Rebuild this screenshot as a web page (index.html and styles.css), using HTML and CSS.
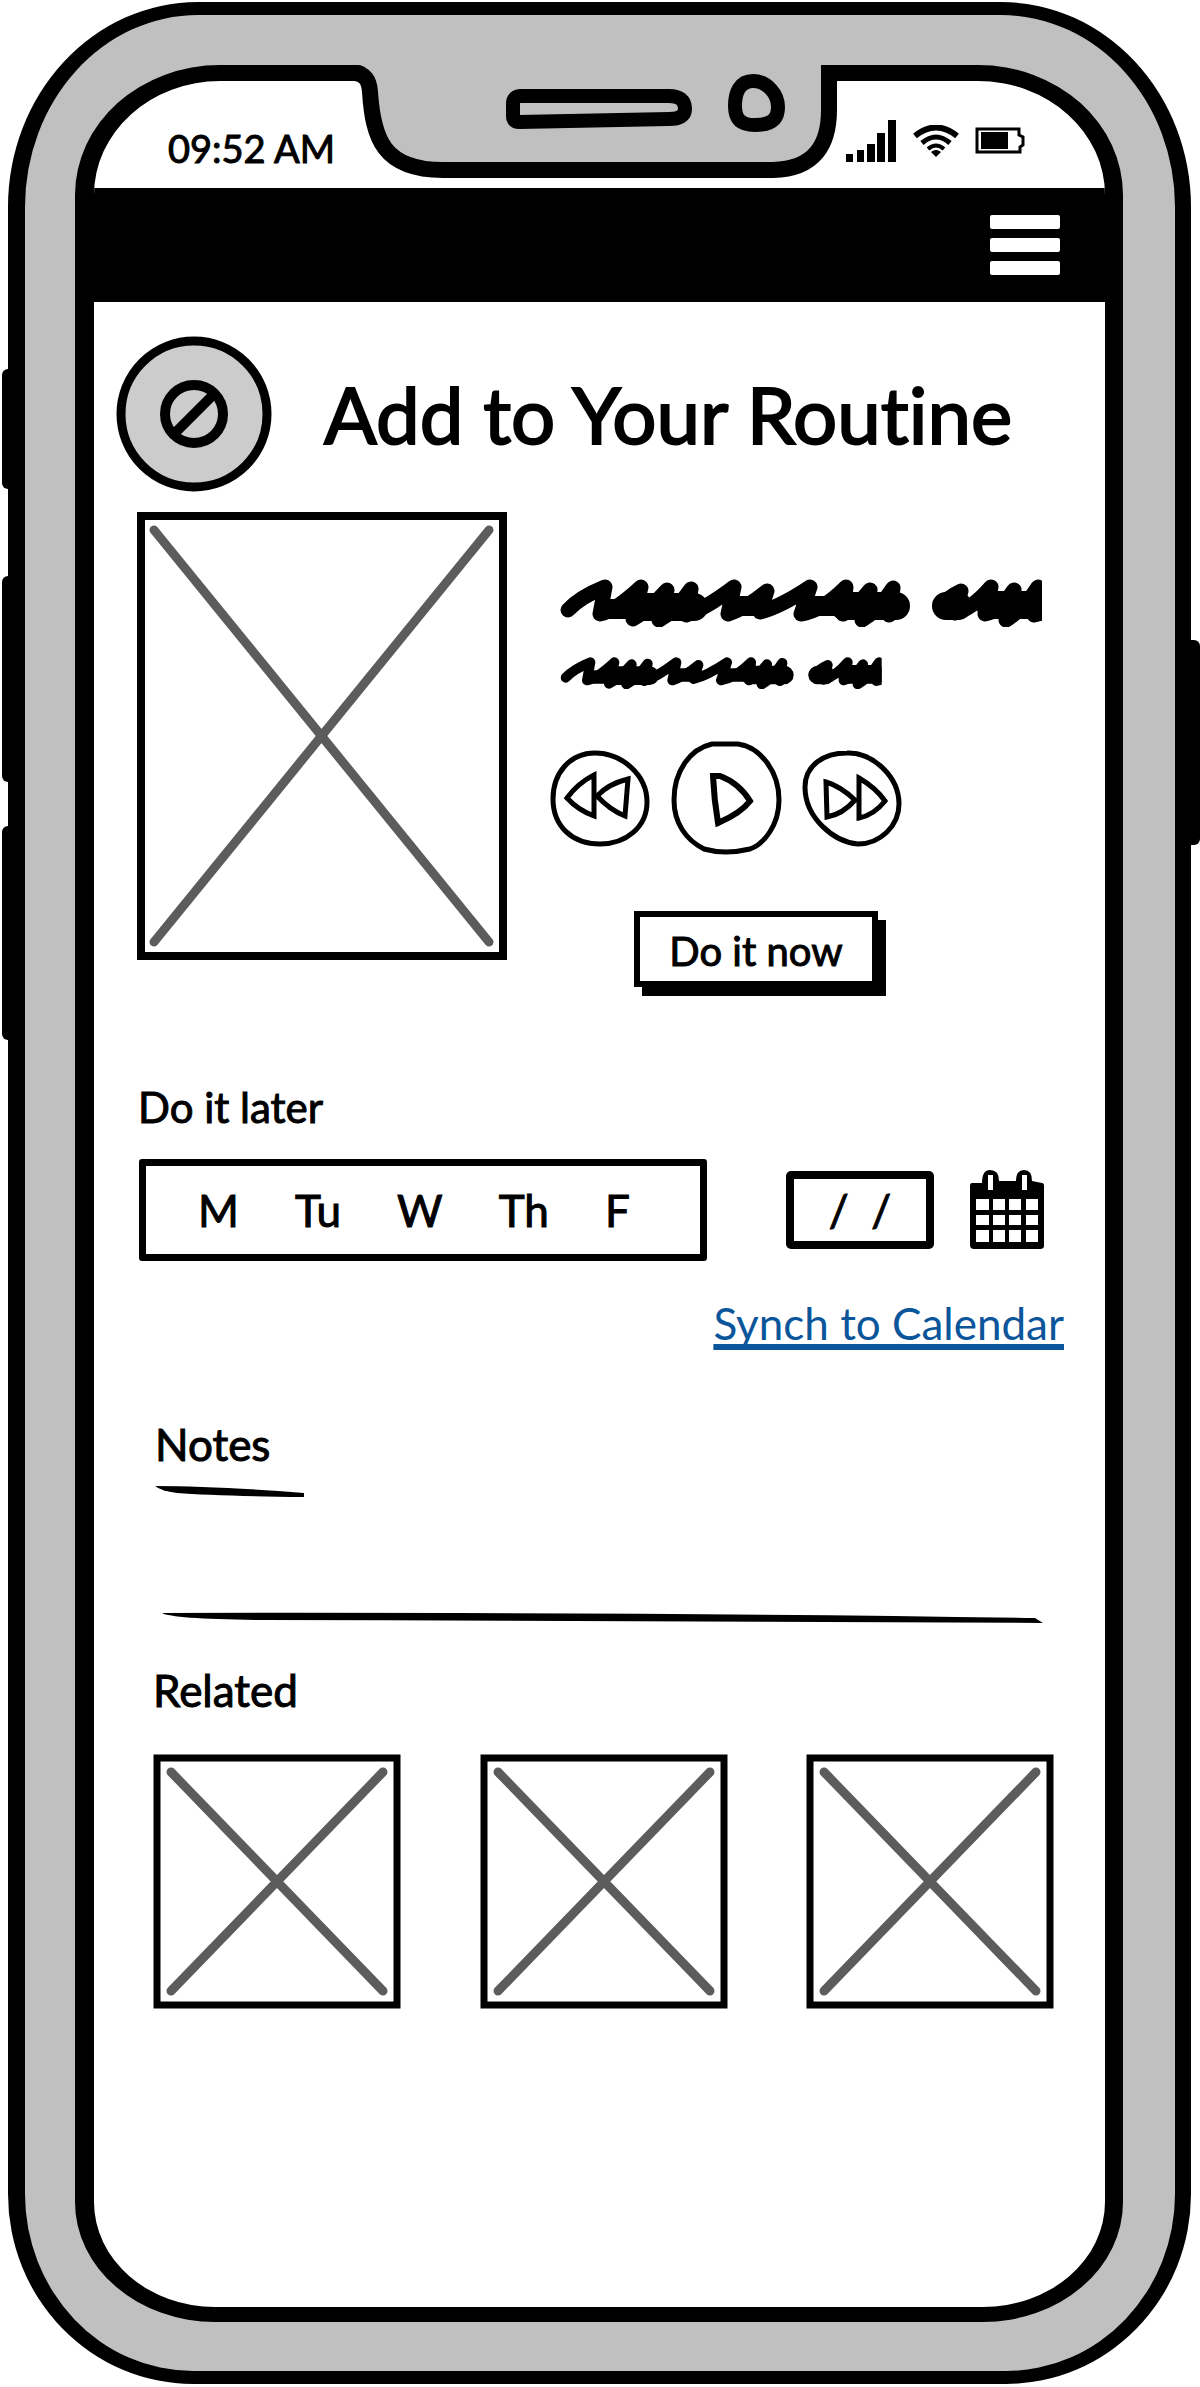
FILE: index.html
```html
<!DOCTYPE html>
<html lang="en">
<head>
<meta charset="utf-8">
<meta name="viewport" content="width=device-width, initial-scale=1">
<title>Add to Your Routine</title>
<link rel="stylesheet" href="styles.css">
</head>
<body>
<svg class="defs" aria-hidden="true">
  <symbol id="scribble" viewBox="0 0 482 48">
    <g fill="none" stroke="#000" stroke-width="15" stroke-linecap="round" stroke-linejoin="round">
      <path d="M8 31Q20 18 45 8L40 35Q55 32 81 8L73 40Q88 32 107 11L99 41Q116 32 131 10L126 36Q145 30 174 8L168 35Q185 30 207 12L200 33Q220 28 250 8L241 35Q262 32 286 8L283 35Q295 30 310 11L302 41Q318 32 333 9L329 36L341 28"/>
      <path d="M380 28Q388 18 401 12L395 34Q412 30 431 8L425 35Q440 32 454 11L446 41Q464 30 478 8L474 36L490 32"/>
      <path d="M46 30H130M174 27H204M250 27H280" stroke-width="20"/>
      <path d="M74 28H134M284 27H336M386 27H398M430 26H474" stroke-width="28"/>
    </g>
  </symbol>
</svg>
<div class="phone">
  <span class="key key-mute"></span>
  <span class="key key-up"></span>
  <span class="key key-down"></span>
  <span class="key key-power"></span>
  <svg class="notch" viewBox="0 0 500 122" aria-hidden="true">
    <path d="M0 0V5H6Q20 5 20 26C22 78 34 108 90 108H424C462 107 478 84 478 50V12H500V0Z" fill="#c0c0c0"/>
    <path d="M0 13H4Q18 14 19 32C22 78 32 110 92 110H422C464 109 478 84 478 50V13H500" fill="none" stroke="#000" stroke-width="16"/>
    <path d="M170 36H318Q334 36 334 49Q334 59 318 59L168 62Q162 62 162 56V44Q162 36 170 36Z" fill="none" stroke="#000" stroke-width="14"/>
    <path d="M402 21C416 21 427 34 427 47C427 60 419 65 404 65C389 65 384 58 384 46C384 32 389 21 402 21Z" fill="none" stroke="#000" stroke-width="14"/>
  </svg>
  <div class="screen">
    <div class="status">
      <span class="time">09:52 AM</span>
      <span class="indicators">
        <svg width="52" height="44" viewBox="0 0 52 44" aria-label="Signal"><path d="M1 35h7v8H1zM12 31h7v12h-7zM22 25h8v18h-8zM32 14h8v29h-8zM43 1h8v42h-8z"/></svg>
        <svg width="46" height="32" viewBox="0 0 46 32" aria-label="Wi-Fi"><g fill="none" stroke="#000" stroke-width="6"><path d="M2 11Q23 -6 44 11"/><path d="M9 18Q23 6 37 18" stroke-width="5"/><path d="M15 24Q23 17 31 24" stroke-width="4"/></g><path d="M18 27Q23 23 28 27L23 32Z"/></svg>
        <svg width="50" height="29" viewBox="0 0 50 29" aria-label="Battery"><path d="M2 3H44V9L48 11V19L45 21V26H2Z" fill="none" stroke="#000" stroke-width="3"/><path d="M6 6h27v17H6z"/></svg>
      </span>
    </div>
    <nav class="bar">
      <button class="menu" aria-label="Menu"><i></i><i></i><i></i></button>
    </nav>
    <main>
      <header class="head">
        <svg width="156" height="156" viewBox="0 0 156 156" aria-hidden="true"><circle cx="78" cy="78" r="73" fill="#ccc" stroke="#000" stroke-width="9"/><g fill="none" stroke="#000" stroke-width="10"><circle cx="78" cy="78" r="29"/><path d="M58 98L98 58"/></g></svg>
        <h1>Add to Your Routine</h1>
      </header>
      <section class="hero">
        <svg class="photo" viewBox="0 0 372 450" role="img" aria-label="Image placeholder"><path d="M5 5H367V445H5Z" fill="#fff" stroke="#000" stroke-width="8"/><path d="M18 19L353 431M353 19L18 431" stroke="#5c5c5c" stroke-width="9" stroke-linecap="round"/></svg>
        <div class="details">
          <svg class="line-lg" viewBox="0 0 482 48" aria-hidden="true"><use href="#scribble"/></svg>
          <svg class="line-sm" viewBox="0 0 482 48" aria-hidden="true"><use href="#scribble"/></svg>
          <div class="controls">
            <button aria-label="Rewind"><svg width="100" height="97" viewBox="0 0 100 97"><g fill="none" stroke="#000" stroke-width="5"><path d="M45 3C72 3 97 25 97 52C97 77 76 94 50 94C22 94 3 76 3 49C3 23 20 3 45 3Z"/><path d="M17 48Q28 33 44 25V66Q28 60 17 48ZM47 46Q58 34 78 29L75 66Q60 60 47 46Z"/></g></svg></button>
            <button aria-label="Play"><svg width="112" height="114" viewBox="-2 0 112 114"><g fill="none" stroke="#000" stroke-width="5"><path d="M40 3H66C88 6 107 30 107 59C107 84 92 103 78 108Q53 114 32 108C14 99 2 82 2 59C2 30 18 8 40 3Z"/><path d="M41 35H48Q67 42 78 60Q69 72 46 82Q42 58 41 35Z" stroke-width="6"/></g></svg></button>
            <button aria-label="Fast forward"><svg width="100" height="97" viewBox="0 0 100 97"><g fill="none" stroke="#000" stroke-width="5"><path d="M45 3C70 2 97 26 97 54C97 76 78 94 56 94C32 92 3 68 3 37C3 15 22 3 45 3Z"/><path d="M24 32Q38 36 53 50Q41 64 25 67ZM57 28Q74 38 83 51Q72 65 57 68Z"/></g></svg></button>
          </div>
          <button class="now">Do it now</button>
        </div>
      </section>
      <section class="later">
        <h2>Do it later</h2>
        <div class="schedule">
          <div class="days">
            <button>M</button><button>Tu</button><button>W</button><button>Th</button><button>F</button>
          </div>
          <input class="date" type="text" value="/  /" aria-label="Date">
          <button class="pick" aria-label="Open calendar"><svg width="76" height="82" viewBox="0 0 76 82"><path d="M3 14H13Q13 1 21 1Q30 1 30 12H47Q47 1 55 1Q63 1 63 12L73 14Q75 14 75 17V77Q75 80 71 80H5Q1 80 1 76V17Q1 14 3 14Z"/><path d="M19 6h5v15h-5zM53 6h5v15h-5zM7 30h13v11H7zM24 30h12v11H24zM40 30h12v11H40zM57 30h12v11H57zM7 46h13v10H7zM24 46h12v10H24zM40 46h12v10H40zM57 46h12v10H57zM7 61h13v12H7zM24 61h12v12H24zM40 61h12v12H40zM57 61h12v12H57z" fill="#fff"/></svg></button>
        </div>
        <a class="synch" href="#">Synch to Calendar</a>
      </section>
      <section class="notes">
        <h2><label for="notes">Notes</label></h2>
        <svg class="stroke-short" viewBox="0 0 149 12" preserveAspectRatio="none" aria-hidden="true"><path d="M0 0Q60 0 149 7V11Q60 10 22 7Q6 5 0 0Z"/></svg>
        <textarea id="notes"></textarea>
        <svg class="stroke-long" viewBox="0 0 880 13" preserveAspectRatio="none" aria-hidden="true"><path d="M0 1Q500 0 872 6L880 11Q500 9 100 8Q10 7 0 1Z"/></svg>
      </section>
      <section class="related">
        <h2>Related</h2>
        <div class="tiles">
          <svg viewBox="0 0 248 256" role="img" aria-label="Related item 1"><path d="M4 4H244V251H4Z" fill="#fff" stroke="#000" stroke-width="7"/><path d="M18 18L230 237M230 18L18 237" stroke="#5c5c5c" stroke-width="9" stroke-linecap="round"/></svg>
          <svg viewBox="0 0 248 256" role="img" aria-label="Related item 2"><path d="M4 4H244V251H4Z" fill="#fff" stroke="#000" stroke-width="7"/><path d="M18 18L230 237M230 18L18 237" stroke="#5c5c5c" stroke-width="9" stroke-linecap="round"/></svg>
          <svg viewBox="0 0 248 256" role="img" aria-label="Related item 3"><path d="M4 4H244V251H4Z" fill="#fff" stroke="#000" stroke-width="7"/><path d="M18 18L230 237M230 18L18 237" stroke="#5c5c5c" stroke-width="9" stroke-linecap="round"/></svg>
        </div>
      </section>
    </main>
  </div>
</div>
</body>
</html>
```
FILE: styles.css
```css
* { box-sizing: border-box; }
body {
  margin: 0;
  padding: 2px 9px 3px 8px;
  min-height: 100vh;
  display: flex;
  background: #fff;
  color: #000;
  font: 44px/56px Lato, "Open Sans", sans-serif;
  font-variant-ligatures: none;
  -webkit-text-stroke: 1px currentColor;
}
button, input, textarea { font: inherit; color: inherit; -webkit-text-stroke: inherit; }
button { padding: 0; border: 0; background: none; cursor: pointer; }
svg { display: block; }
h1, h2 { margin: 0; font-weight: 400; }
h2 { font-size: 44px; }
.defs { position: absolute; width: 0; height: 0; }

.phone {
  position: relative;
  flex: 1;
  display: flex;
  padding: 50px 52px 49px 50px;
  border: solid #000;
  border-width: 13px 16px 13px 17px;
  border-radius: 190px 190px 185px 185px / 205px 205px 190px 190px;
  background: #c0c0c0;
}
.screen {
  flex: 1;
  min-width: 0;
  display: flex;
  flex-direction: column;
  overflow: hidden;
  border: solid #000;
  border-width: 16px 18px 15px 19px;
  border-radius: 145px 145px 140px 140px / 130px 130px 120px 120px;
  background: #fff;
}
/* Hardware keys stick out past the frame. */
.key { position: absolute; width: 9px; background: #000; border-radius: 6px 0 0 6px; left: -23px; }
.key-mute { top: 354px; height: 120px; }
.key-up { top: 561px; height: 206px; }
.key-down { top: 811px; height: 214px; }
.key-power { top: 625px; height: 205px; left: auto; right: -25px; border-radius: 0 6px 6px 0; width: 12px; }
.notch { position: absolute; top: 45px; left: 50%; width: 500px; margin-left: -249px; z-index: 1; }

.status {
  display: flex;
  align-items: center;
  justify-content: space-between;
  height: 107px;
  padding: 26px 80px 0 74px;
}
.time { font-size: 38px; }
.indicators { display: flex; align-items: center; gap: 16px; padding-bottom: 14px; }
.bar {
  display: flex;
  align-items: center;
  justify-content: flex-end;
  height: 114px;
  padding-right: 45px;
  background: #000;
}
.menu { display: flex; flex-direction: column; gap: 9px; width: 70px; }
.menu i { height: 14px; border-radius: 2px; background: #fff; }

main { flex: 1; padding: 34px 41px 60px 42px; }
.head { display: flex; align-items: center; gap: 52px; margin-left: -20px; }
h1 { font-size: 78px; line-height: 96px; white-space: nowrap; -webkit-text-stroke-width: 2px; }

.hero { display: flex; gap: 42px; margin-top: 19px; }
.photo { width: 372px; height: 450px; flex: none; }
.details { display: flex; flex-direction: column; align-items: flex-start; padding-top: 68px; }
.line-lg { width: 482px; height: 48px; margin-left: 10px; }
.line-sm { width: 326px; height: 32px; margin: 30px 0 52px 8px; }
.controls { display: flex; align-items: center; gap: 20px; }
.now {
  margin: 56px 0 10px 84px;
  width: 244px;
  height: 76px;
  padding-top: 4px;
  border: 6px solid #000;
  background: #fff;
  box-shadow: 8px 9px 0 #000;
  font-size: 40px;
}

.later { margin-top: 82px; }
.later h2 { padding-left: 2px; font-size: 42px; }
.schedule { display: flex; align-items: center; margin: 24px 19px 34px 3px; }
.days {
  display: flex;
  justify-content: space-between;
  align-items: center;
  width: 568px;
  height: 102px;
  padding: 0 70px 0 52px;
  border: 7px solid #000;
  border-radius: 3px;
}
.date {
  width: 148px;
  height: 78px;
  margin-left: auto;
  padding: 0;
  border: 8px solid #000;
  border-radius: 5px;
  background: #fff;
  text-align: center;
  white-space: pre;
}
.pick { margin-left: 35px; }
.synch { display: block; width: fit-content; margin-left: auto; color: #0b559b; text-underline-offset: 4px; text-decoration-thickness: 6px; text-decoration-skip-ink: none; -webkit-text-stroke-width: 0; }

.notes { margin: 65px 21px 0 19px; }
.stroke-short { width: 149px; height: 12px; margin-top: 14px; }
textarea { display: block; width: 100%; height: 114px; padding: 12px 0; border: 0; resize: none; outline: 0; background: none; }
.stroke-long { width: 100%; height: 13px; padding-left: 7px; }

.related { margin: 37px 10px 0 17px; }
.tiles { display: flex; justify-content: space-between; margin-top: 36px; }
.tiles svg { width: 248px; height: 256px; }
```
